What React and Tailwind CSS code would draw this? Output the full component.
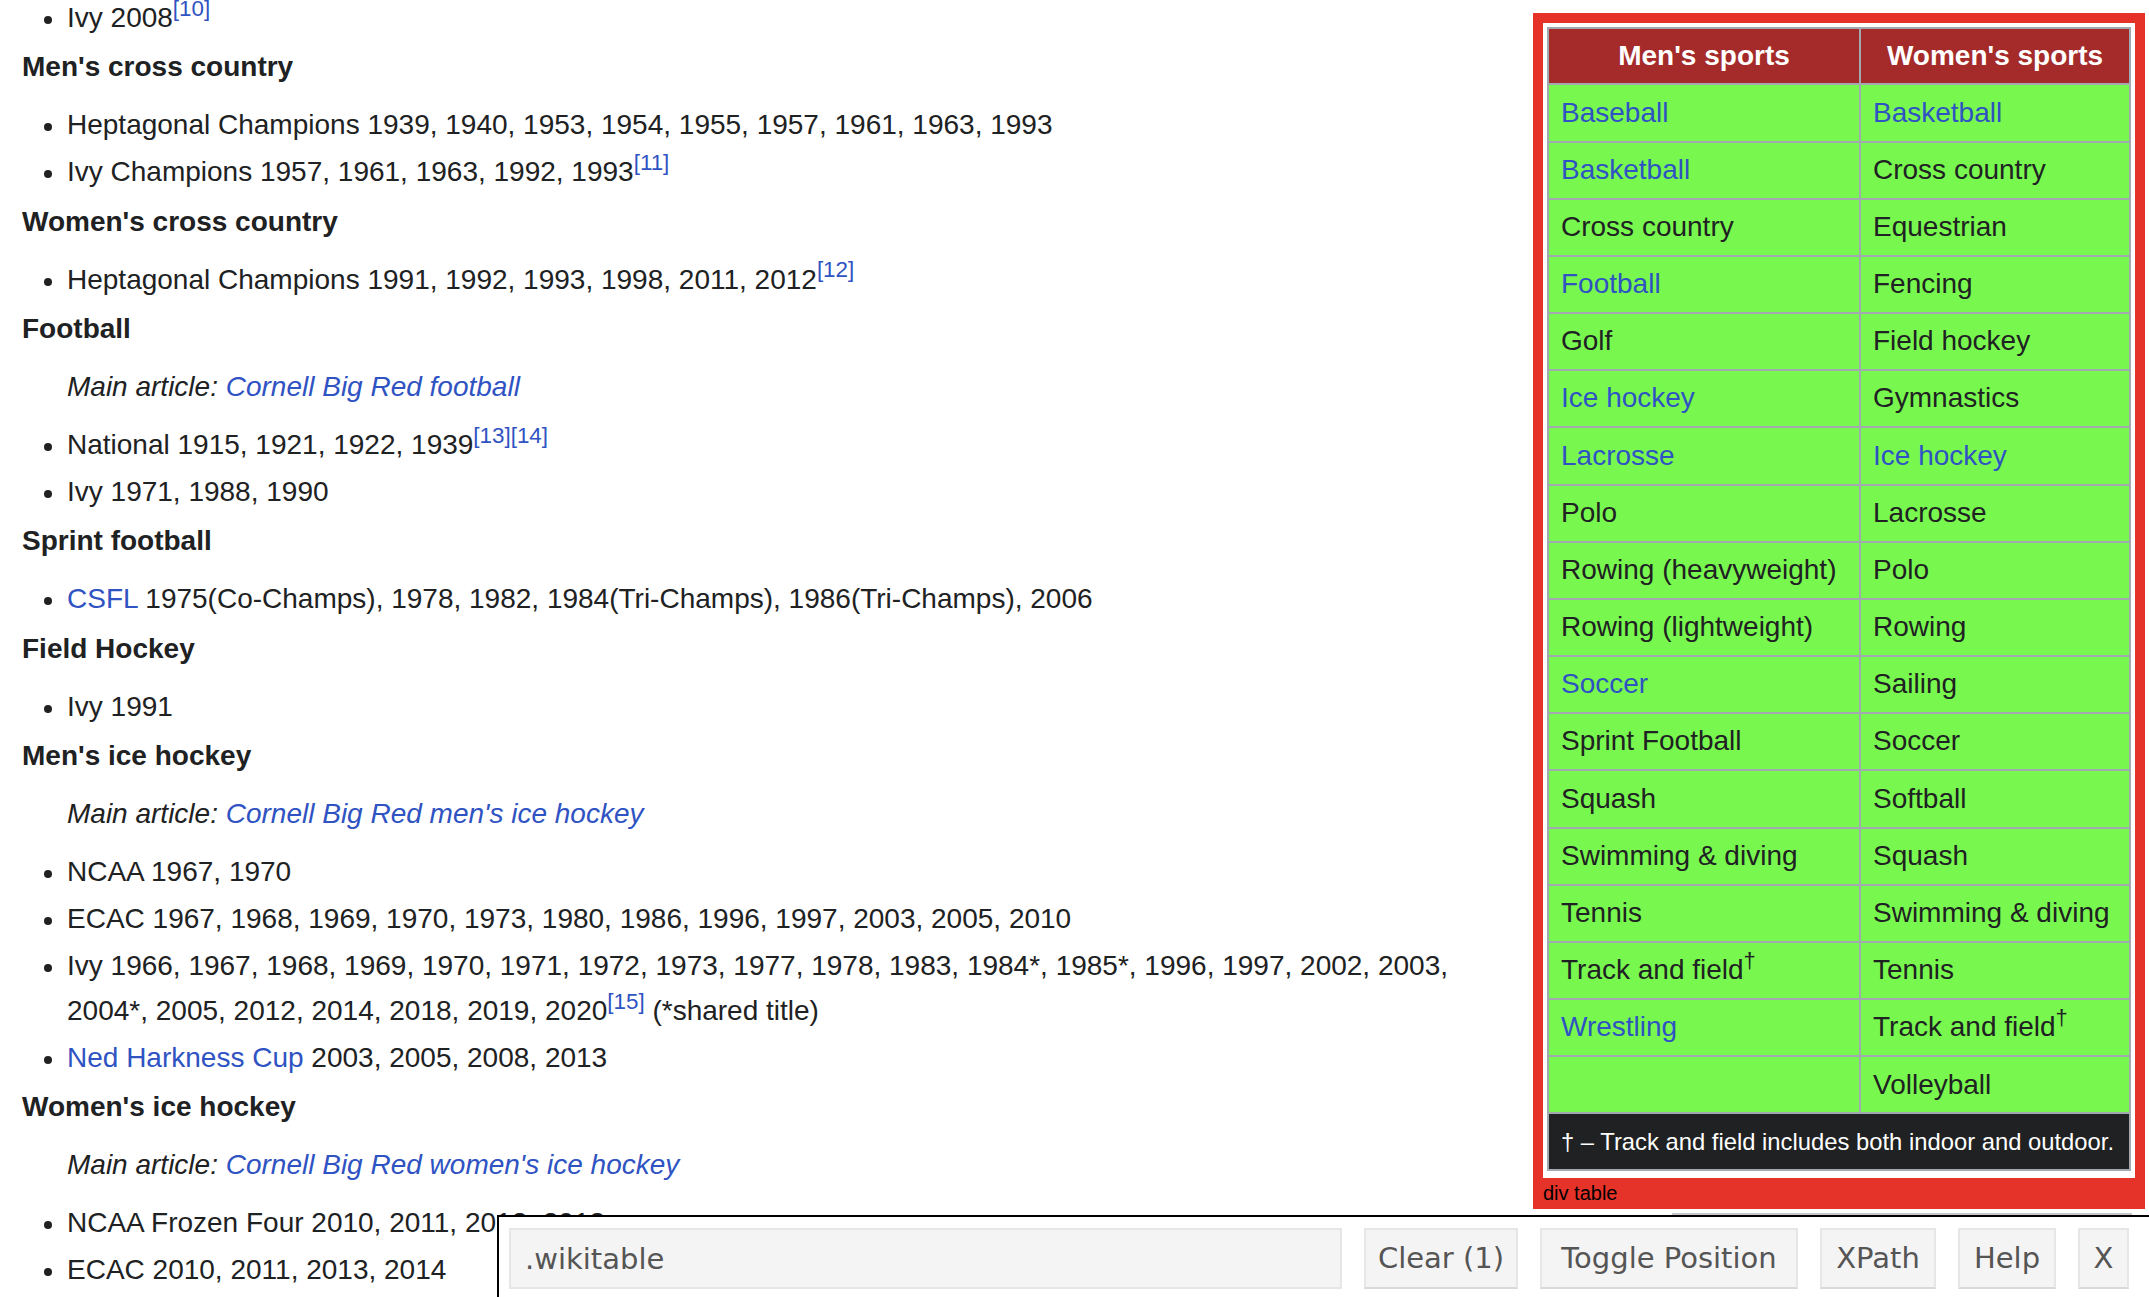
const LINK = "text-[#2f53c2]";

function Ref({ n }) {
  return <sup className={`text-[22.4px] ${LINK}`}>{n}</sup>;
}

function Li({ children }) {
  return (
    <li className="flex mb-[2.1px]">
      <span className="w-[45px] shrink-0">
        <span className="block ml-[22px] mt-[20px] w-[8px] h-[8px] rounded-full bg-[#202122]" />
      </span>
      <span className="flex-1">{children}</span>
    </li>
  );
}

function Head({ children }) {
  return <div className="font-bold mt-[4.6px] mb-[13.2px]">{children}</div>;
}

function Main({ children }) {
  return (
    <div className="pl-[45px] italic mb-[13.4px]">
      Main article: <a className={LINK}>{children}</a>
    </div>
  );
}

const MEN = [
  ["Baseball", true], ["Basketball", true], ["Cross country"], ["Football", true],
  ["Golf"], ["Ice hockey", true], ["Lacrosse", true], ["Polo"],
  ["Rowing (heavyweight)"], ["Rowing (lightweight)"], ["Soccer", true], ["Sprint Football"],
  ["Squash"], ["Swimming & diving"], ["Tennis"], ["Track and field", false, true],
  ["Wrestling", true], [""],
];

const WOMEN = [
  ["Basketball", true], ["Cross country"], ["Equestrian"], ["Fencing"],
  ["Field hockey"], ["Gymnastics"], ["Ice hockey", true], ["Lacrosse"],
  ["Polo"], ["Rowing"], ["Sailing"], ["Soccer"],
  ["Softball"], ["Squash"], ["Swimming & diving"], ["Tennis"],
  ["Track and field", false, true], ["Volleyball"],
];

function Cell({ item }) {
  const [label, link, dagger] = item;
  return (
    <td className="border-r-2 border-b-2 border-[#a2a9b1] bg-[#78f84f] px-[12px] py-[5.2px] leading-[44.8px] whitespace-nowrap">
      <span className={link ? LINK : "text-[#202122]"}>{label}</span>
      {dagger && <sup className="text-[22px]">†</sup>}
      {!label && <span>&nbsp;</span>}
    </td>
  );
}

function SportsTable() {
  return (
    <div className="mt-[13px] w-[612px] shrink-0 bg-[#e6332a]">
      <div className="mx-[10px] mt-[10px] bg-white p-[4px] pb-[7px]">
        <table className="w-[584px] table-fixed border-separate border-spacing-0 border-t-2 border-l-2 border-[#a2a9b1]">
          <thead>
            <tr>
              <th className="w-[312px] border-r-2 border-b-2 border-[#a2a9b1] bg-[#a52a2a] py-[4.8px] leading-[44.8px] text-white font-bold text-center">
                Men's sports
              </th>
              <th className="w-[270px] border-r-2 border-b-2 border-[#a2a9b1] bg-[#a52a2a] py-[4.8px] leading-[44.8px] text-white font-bold text-center">
                Women's sports
              </th>
            </tr>
          </thead>
          <tbody>
            {MEN.map((m, i) => (
              <tr key={i}>
                <Cell item={m} />
                <Cell item={WOMEN[i]} />
              </tr>
            ))}
            <tr>
              <td colSpan={2} className="border-r-2 border-b-2 border-[#a2a9b1] bg-[#202122] text-white px-[12px] pt-[9px] pb-[8px] text-[23.8px] leading-[38px] whitespace-nowrap">
                † – Track and field includes both indoor and outdoor.
              </td>
            </tr>
          </tbody>
        </table>
      </div>
      <div className="px-[10px] pt-[4px] pb-[4px] text-[20px] leading-[23px] text-black">div table</div>
    </div>
  );
}

function Article() {
  return (
    <div className="w-[1533px] shrink-0 pl-[22px] pr-[33px] -mt-[4px]">
      <ul>
        <Li>Ivy 2008<Ref n="[10]" /></Li>
      </ul>
      <Head>Men's cross country</Head>
      <ul>
        <Li>Heptagonal Champions 1939, 1940, 1953, 1954, 1955, 1957, 1961, 1963, 1993</Li>
        <Li>Ivy Champions 1957, 1961, 1963, 1992, 1993<Ref n="[11]" /></Li>
      </ul>
      <Head>Women's cross country</Head>
      <ul>
        <Li>Heptagonal Champions 1991, 1992, 1993, 1998, 2011, 2012<Ref n="[12]" /></Li>
      </ul>
      <Head>Football</Head>
      <Main>Cornell Big Red football</Main>
      <ul>
        <Li>National 1915, 1921, 1922, 1939<Ref n="[13][14]" /></Li>
        <Li>Ivy 1971, 1988, 1990</Li>
      </ul>
      <Head>Sprint football</Head>
      <ul>
        <Li><a className={LINK}>CSFL</a> 1975(Co-Champs), 1978, 1982, 1984(Tri-Champs), 1986(Tri-Champs), 2006</Li>
      </ul>
      <Head>Field Hockey</Head>
      <ul>
        <Li>Ivy 1991</Li>
      </ul>
      <Head>Men's ice hockey</Head>
      <Main>Cornell Big Red men's ice hockey</Main>
      <ul>
        <Li>NCAA 1967, 1970</Li>
        <Li>ECAC 1967, 1968, 1969, 1970, 1973, 1980, 1986, 1996, 1997, 2003, 2005, 2010</Li>
        <Li>
          Ivy 1966, 1967, 1968, 1969, 1970, 1971, 1972, 1973, 1977, 1978, 1983, 1984*, 1985*, 1996, 1997, 2002, 2003,
          2004*, 2005, 2012, 2014, 2018, 2019, 2020<Ref n="[15]" /> (*shared title)
        </Li>
        <Li><a className={LINK}>Ned Harkness Cup</a> 2003, 2005, 2008, 2013</Li>
      </ul>
      <Head>Women's ice hockey</Head>
      <Main>Cornell Big Red women's ice hockey</Main>
      <ul>
        <Li>NCAA Frozen Four 2010, 2011, 2012, 2013</Li>
        <Li>ECAC 2010, 2011, 2013, 2014</Li>
      </ul>
    </div>
  );
}

function GadgetBar() {
  const btn = "h-[61px] shrink-0 bg-[#f4f4f4] border-2 border-[#e6e6e6] border-b-[#d9d9d9] text-[#555] text-center";
  return (
    <div className="absolute left-[497px] top-[1215px] right-0 bottom-0 border-t-2 border-l-2 border-black bg-white flex items-start gap-[22px] pl-[10px] pt-[11px] font-['DejaVu_Sans',sans-serif] text-[29px]">
      <input
        defaultValue=".wikitable"
        className="w-[833px] h-[61px] shrink-0 bg-[#f4f4f4] border-2 border-[#e6e6e6] pl-[14px] text-[#555] outline-none"
      />
      <button className={`${btn} w-[154px]`}>Clear (1)</button>
      <button className={`${btn} w-[258px]`}>Toggle Position</button>
      <button className={`${btn} w-[116px]`}>XPath</button>
      <button className={`${btn} w-[98px]`}>Help</button>
      <button className={`${btn} w-[51px]`}>X</button>
    </div>
  );
}

export default function App() {
  return (
    <div className="relative h-[1297px] w-[2149px] overflow-hidden bg-white font-['Liberation_Sans',Arial,sans-serif] text-[28px] leading-[1.6] text-[#202122]">
      <div className="flex items-start">
        <Article />
        <SportsTable />
      </div>
      <div className="absolute left-[1672px] top-[1213px] w-[460px] h-[2px] bg-[#c4c7cc]" />
      <GadgetBar />
    </div>
  );
}
